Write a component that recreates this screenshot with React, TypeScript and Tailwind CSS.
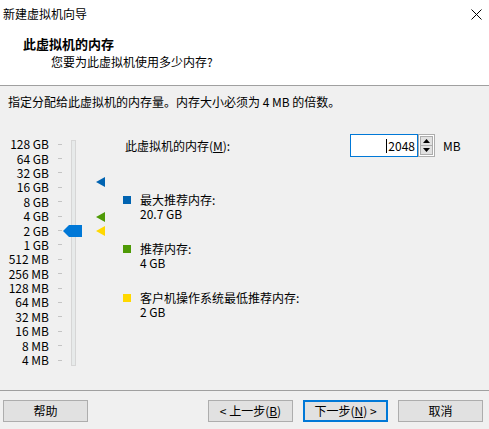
const scale = [
  "128 GB",
  "64 GB",
  "32 GB",
  "16 GB",
  "8 GB",
  "4 GB",
  "2 GB",
  "1 GB",
  "512 MB",
  "256 MB",
  "128 MB",
  "64 MB",
  "32 MB",
  "16 MB",
  "8 MB",
  "4 MB",
];

const legend = [
  { color: "bg-[#0063b1]", label: "最大推荐内存:", value: "20.7 GB" },
  { color: "bg-[#4e9a06]", label: "推荐内存:", value: "4 GB" },
  { color: "bg-[#ffd800]", label: "客户机操作系统最低推荐内存:", value: "2 GB" },
];

function Triangle({ color, top }: { color: string; top: string }) {
  return (
    <svg className={`absolute left-[96px] ${top}`} width="10" height="10" viewBox="0 0 10 10">
      <polygon points="0,5 9,0 9,10" fill={color} />
    </svg>
  );
}

function Btn({ label, primary }: { label: React.ReactNode; primary?: boolean }) {
  return (
    <button
      className={`flex h-[22px] w-[85px] items-center justify-center bg-[#e1e1e1] text-[12px] leading-none text-black ${
        primary ? "border-2 border-[#0078d7]" : "border border-[#adadad]"
      }`}
    >
      {label}
    </button>
  );
}

export default function App() {
  return (
    <div className="flex h-[429px] w-[489px] flex-col overflow-hidden bg-[#f0f0f0] font-['Noto_Sans_CJK_SC',sans-serif] text-[12px] text-black">
      <div className="border-b border-[#a0a0a0] bg-white">
        <div className="flex h-[28px] items-center justify-between pl-[3px] pr-[7px]">
          <span>新建虚拟机向导</span>
          <svg width="11" height="11" viewBox="0 0 11 11">
            <path d="M0.5 0.5 L10.5 10.5 M10.5 0.5 L0.5 10.5" stroke="#000" strokeWidth="1" />
          </svg>
        </div>
        <div className="pb-[15px] pt-[8px]">
          <div className="h-[16px] pl-[23px] text-[13px] font-bold leading-[16px]">此虚拟机的内存</div>
          <div className="mt-[2px] h-[16px] pl-[51px] leading-[16px]">您要为此虚拟机使用多少内存?</div>
        </div>
      </div>

      <div className="flex-1">
        <div className="mt-[8px] h-[16px] pl-[8px] leading-[16px]">
          指定分配给此虚拟机的内存量。内存大小必须为 4 MB 的倍数。
        </div>

        <div className="mt-[24px] flex">
          <div className="relative w-[123px] pt-[3px]">
            <div className="absolute left-[71px] top-[6px] h-[226px] w-[5px] border border-[#d6d6d6] bg-[#e7eaea]" />
            {scale.map((s) => (
              <div key={s} className="flex h-[14.4px] items-center">
                <span className="w-[49px] text-right leading-none">{s}</span>
                <span className="ml-[9px] h-px w-[4px] bg-[#c4c4c4]" />
              </div>
            ))}
            <svg className="absolute left-[63px] top-[91px]" width="19" height="12" viewBox="0 0 19 12">
              <polygon points="0,6 6,0 19,0 19,12 6,12" fill="#0078d7" />
            </svg>
            <Triangle color="#0063b1" top="top-[43px]" />
            <Triangle color="#4e9a06" top="top-[78px]" />
            <Triangle color="#ffd800" top="top-[92px]" />
          </div>

          <div className="flex-1">
            <div className="flex h-[23px] items-center">
              <span className="ml-[2px] w-[225px]">
                此虚拟机的内存(<span className="underline">M</span>):
              </span>
              <div className="flex h-[23px] w-[68px] items-center justify-end border border-[#0078d7] bg-white pr-[2px]">
                <span className="mr-px h-[14px] w-px bg-black" />
                <span className="leading-none">2048</span>
              </div>
              <div className="flex h-[23px] w-[17px] flex-col border border-[#adadad] bg-white p-px">
                <div className="flex flex-1 items-center justify-center border border-[#adadad] bg-[#e1e1e1]">
                  <svg width="7" height="4" viewBox="0 0 7 4">
                    <polygon points="0,4 3.5,0 7,4" fill="#000" />
                  </svg>
                </div>
                <div className="flex flex-1 items-center justify-center border border-t-0 border-[#adadad] bg-[#e1e1e1]">
                  <svg width="7" height="4" viewBox="0 0 7 4">
                    <polygon points="0,0 7,0 3.5,4" fill="#000" />
                  </svg>
                </div>
              </div>
              <span className="ml-[8px]">MB</span>
            </div>

            <div className="mt-[36px] flex flex-col gap-[21px]">
              {legend.map((l) => (
                <div key={l.label} className="flex">
                  <span className={`mt-[3px] h-[8px] w-[8px] ${l.color}`} />
                  <div className="ml-[9px]">
                    <div className="h-[14px] leading-[14px]">{l.label}</div>
                    <div className="h-[14px] leading-[14px]">{l.value}</div>
                  </div>
                </div>
              ))}
            </div>
          </div>
        </div>
      </div>

      <div className="flex h-[39px] items-start border-t border-[#a0a0a0] pl-[3px] pr-[6px] pt-[9px]">
        <Btn label="帮助" />
        <div className="ml-auto flex gap-[10px]">
          <Btn
            label={
              <>
                &lt; 上一步(<span className="underline">B</span>)
              </>
            }
          />
          <Btn
            primary
            label={
              <>
                下一步(<span className="underline">N</span>) &gt;
              </>
            }
          />
          <Btn label="取消" />
        </div>
      </div>
    </div>
  );
}
